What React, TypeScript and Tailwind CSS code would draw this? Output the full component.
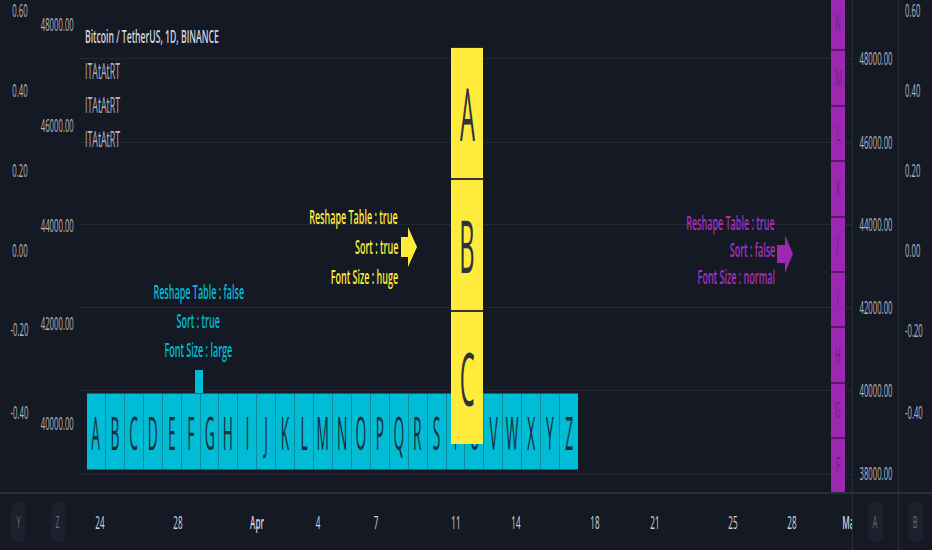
import React from "react";

const priceL = [
  { t: "48000.00", y: 24 },
  { t: "46000.00", y: 125 },
  { t: "44000.00", y: 225 },
  { t: "42000.00", y: 323 },
  { t: "40000.00", y: 423 },
];
const oscL = [
  { t: "0.60", y: 10 },
  { t: "0.40", y: 90 },
  { t: "0.20", y: 170 },
  { t: "0.00", y: 250 },
  { t: "-0.20", y: 329 },
  { t: "-0.40", y: 412 },
];
const priceR = [
  { t: "48000.00", y: 58 },
  { t: "46000.00", y: 142 },
  { t: "44000.00", y: 224 },
  { t: "42000.00", y: 307 },
  { t: "40000.00", y: 390 },
  { t: "38000.00", y: 473 },
];
const oscR = [
  { t: "0.60", y: 10 },
  { t: "0.40", y: 90 },
  { t: "0.20", y: 170 },
  { t: "0.00", y: 250 },
  { t: "-0.20", y: 330 },
  { t: "-0.40", y: 412 },
];
const gridY = [58, 142, 224, 307, 390, 474];
const dates = [
  { t: "24", x: 19.5, b: false },
  { t: "28", x: 98, b: false },
  { t: "Apr", x: 177, b: true },
  { t: "4", x: 238, b: false },
  { t: "7", x: 296, b: false },
  { t: "11", x: 376, b: false },
  { t: "14", x: 436, b: false },
  { t: "18", x: 515, b: false },
  { t: "21", x: 575, b: false },
  { t: "25", x: 653, b: false },
  { t: "28", x: 712, b: false },
  { t: "Mar", x: 770, b: true },
];
const cyanLetters = "ABCDEFGHIJKLMNOPQRSTUVWXYZ".split("");
const purpleLetters = ["N", "M", "L", "K", "J", "I", "H", "G", "F"];

function Circle({ l }: { l: string }) {
  return (
    <div className="w-[15px] h-[42px] rounded-full bg-[#1c202c] flex items-center justify-center">
      <span className="inline-block text-[16px] leading-none scale-x-[0.45] text-[#6a6d78]">{l}</span>
    </div>
  );
}

export default function App() {
  return (
    <div className="w-[932px] h-[550px] bg-[#151924] flex flex-col overflow-hidden [font-family:'Open_Sans','Liberation_Sans',sans-serif]">
      <div className="flex h-[492px]">
        {/* left oscillator axis */}
        <div className="relative w-[36px]">
          {oscL.map((o) => (
            <span
              key={o.t}
              className="absolute right-[8px] -translate-y-1/2 origin-right scale-x-[0.43] text-[18px] leading-none text-[#b2b5be] whitespace-nowrap"
              style={{ top: o.y }}
            >
              {o.t}
            </span>
          ))}
        </div>
        {/* left price axis */}
        <div className="relative w-[44px]">
          {priceL.map((o) => (
            <span
              key={o.t}
              className="absolute right-[6px] -translate-y-1/2 origin-right scale-x-[0.43] text-[18px] leading-none text-[#b2b5be] whitespace-nowrap"
              style={{ top: o.y }}
            >
              {o.t}
            </span>
          ))}
        </div>

        {/* chart pane */}
        <div className="relative flex-1 overflow-hidden">
          {dates.map((d) => (
            <div key={"v" + d.t + d.x} className="absolute top-0 bottom-0 w-px bg-[#191d29]" style={{ left: d.x }} />
          ))}
          {gridY.map((y) => (
            <div key={y} className="absolute left-0 right-0 h-px bg-[#242834]" style={{ top: y }} />
          ))}

          {/* legend */}
          <div className="absolute left-[5px] top-[17px] flex flex-col">
            <div className="h-[37px] flex items-center">
              <span className="inline-block origin-left scale-x-[0.48] text-[18px] leading-none font-semibold text-[#d1d4dc] whitespace-nowrap">
                Bitcoin / TetherUS, 1D, BINANCE
              </span>
            </div>
            {[0, 1, 2].map((i) => (
              <div key={i} className="h-[34px] flex items-center">
                <span className="inline-block origin-left scale-x-[0.42] text-[21px] leading-none text-[#b2b5be] whitespace-nowrap">
                  ITAtAtRT
                </span>
              </div>
            ))}
          </div>

          {/* cyan annotation */}
          <div className="absolute left-[18px] top-[277px] w-[201px] flex flex-col items-center">
            {["Reshape Table : false", "Sort : true", "Font Size : large"].map((t) => (
              <div key={t} className="h-[29px] flex items-center">
                <span className="inline-block scale-x-[0.45] text-[20px] leading-none font-semibold text-[#00bcd4] whitespace-nowrap">
                  {t}
                </span>
              </div>
            ))}
          </div>
          <div className="absolute left-[115px] top-[370px] w-[8px] h-[24px] bg-[#00bcd4]" />

          {/* cyan table */}
          <div className="absolute left-[7px] top-[393px] w-[491px] h-[77px] flex border-y border-[#0b6c7a] bg-[#00bcd4]">
            {cyanLetters.map((l, i) => (
              <div
                key={l}
                className={
                  "flex-1 flex items-center justify-center overflow-hidden " +
                  (i === 0 ? "" : "border-l border-[#0a8a9c]")
                }
              >
                <span className="inline-block scale-x-[0.3] text-[46px] leading-none text-[#1d2b3a]">{l}</span>
              </div>
            ))}
          </div>

          {/* yellow annotation */}
          <div className="absolute right-[454px] top-[202px] flex flex-col items-end">
            {["Reshape Table : true", "Sort : true", "Font Size : huge"].map((t) => (
              <div key={t} className="h-[30px] flex items-center">
                <span className="inline-block origin-right scale-x-[0.45] text-[20px] leading-none font-semibold text-[#ffeb3b] whitespace-nowrap">
                  {t}
                </span>
              </div>
            ))}
          </div>
          <svg className="absolute left-[321px] top-[227px]" width="16" height="40" viewBox="0 0 16 40">
            <polygon points="0,10 7,10 7,0 16,20 7,40 7,30 0,30" fill="#ffeb3b" />
          </svg>

          {/* yellow table */}
          <div className="absolute left-[371px] top-[47px] w-[32px] flex flex-col bg-[#ffeb3b] border-t border-[#2a2d36]">
            {["A", "B", "C"].map((l, i) => (
              <div
                key={l}
                className={
                  "h-[132px] flex items-center justify-center overflow-hidden " +
                  (i < 2 ? "border-b-2 border-[#33343a]" : "")
                }
              >
                <span className="inline-block scale-x-[0.32] text-[74px] leading-none text-[#2f323c]">{l}</span>
              </div>
            ))}
          </div>

          {/* purple annotation */}
          <div className="absolute right-[77px] top-[209px] flex flex-col items-end">
            {["Reshape Table : true", "Sort : false", "Font Size : normal"].map((t) => (
              <div key={t} className="h-[27px] flex items-center">
                <span className="inline-block origin-right scale-x-[0.45] text-[20px] leading-none font-semibold text-[#a431bd] whitespace-nowrap">
                  {t}
                </span>
              </div>
            ))}
          </div>
          <svg className="absolute left-[697px] top-[235px]" width="16" height="38" viewBox="0 0 16 38">
            <polygon points="0,10 8,10 8,0 16,19 8,38 8,28 0,28" fill="#9c27b0" />
          </svg>

          {/* purple table */}
          <div className="absolute left-[751px] top-[-4px] w-[14px] flex flex-col bg-[#9c27b0]">
            {purpleLetters.map((l) => (
              <div key={l} className="h-[55.4px] flex items-center justify-center border-b-2 border-[#5e1670] overflow-hidden">
                <span className="inline-block scale-x-[0.35] text-[21px] leading-none text-[#64257a]">{l}</span>
              </div>
            ))}
          </div>
        </div>

        {/* right price axis */}
        <div className="relative w-[46px] border-l border-[#2a2e39]">
          {priceR.map((o) => (
            <span
              key={o.t}
              className="absolute left-1/2 -translate-x-1/2 -translate-y-1/2 scale-x-[0.43] text-[18px] leading-none text-[#b2b5be] whitespace-nowrap"
              style={{ top: o.y }}
            >
              {o.t}
            </span>
          ))}
        </div>
        {/* right oscillator axis */}
        <div className="relative w-[34px] border-l border-[#2a2e39]">
          {oscR.map((o) => (
            <span
              key={o.t}
              className="absolute left-[6px] -translate-y-1/2 origin-left scale-x-[0.43] text-[18px] leading-none text-[#b2b5be] whitespace-nowrap"
              style={{ top: o.y }}
            >
              {o.t}
            </span>
          ))}
        </div>
      </div>

      {/* time axis */}
      <div className="flex h-[58px] border-t-2 border-[#2a2e39]">
        <div className="w-[36px] flex items-center justify-center">
          <Circle l="Y" />
        </div>
        <div className="w-[44px] flex items-center justify-center">
          <Circle l="Z" />
        </div>
        <div className="relative flex-1 overflow-hidden">
          {dates.map((d) => (
            <span
              key={d.t + d.x}
              className={
                "absolute top-1/2 -translate-x-1/2 -translate-y-1/2 scale-x-[0.45] text-[18px] leading-none text-[#d1d4dc] whitespace-nowrap " +
                (d.b ? "font-semibold" : "")
              }
              style={{ left: d.x }}
            >
              {d.t}
            </span>
          ))}
        </div>
        <div className="w-[46px] border-l border-[#2a2e39] flex items-center justify-center">
          <Circle l="A" />
        </div>
        <div className="w-[34px] border-l border-[#2a2e39] flex items-center justify-center">
          <Circle l="B" />
        </div>
      </div>
    </div>
  );
}
